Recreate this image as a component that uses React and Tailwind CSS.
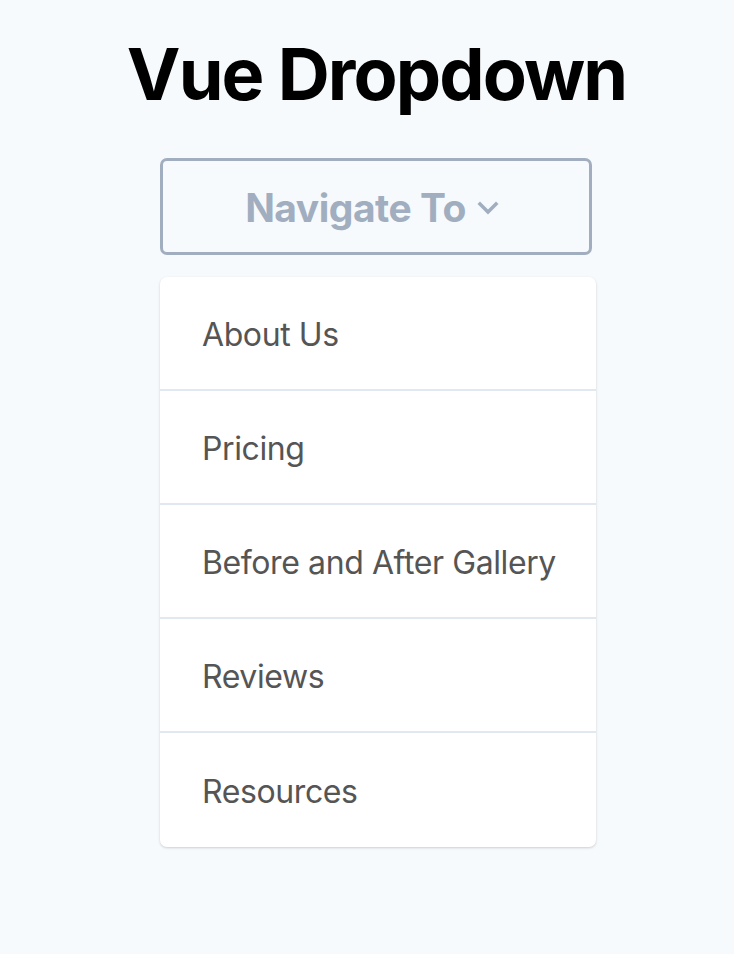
export default function App() {
  const items = ["About Us", "Pricing", "Before and After Gallery", "Reviews", "Resources"];
  return (
    <div className="min-h-[954px] bg-[#f7fafc] font-['Inter',sans-serif]">
      <div className="ml-[160px] w-[436px] flex flex-col pt-[38px] pb-[100px]">
        <h1 className="self-center whitespace-nowrap text-[72px] leading-none font-bold text-black tracking-[-1.9px] -ml-[3px]">
          Vue Dropdown
        </h1>
        <button className="mt-[48px] w-[432px] h-[97px] border-[3px] border-[#a0aec0] rounded-[7px] flex items-center justify-center gap-[11px] text-[#a0aec0] text-[39px] font-bold leading-none pr-[8px] pt-[2px]">
          <span className="tracking-[-0.5px]">Navigate To</span>
          <svg width="22" height="14" viewBox="0 0 22 14" fill="none" stroke="#a0aec0" strokeWidth="3.5" strokeLinecap="square" strokeLinejoin="miter">
            <path d="M3 3 L11 11 L19 3" />
          </svg>
        </button>
        <div className="mt-[22px] bg-white rounded-[7px] shadow-[0_1px_3px_rgba(0,0,0,0.12),0_1px_2px_rgba(0,0,0,0.06)] overflow-hidden">
          {items.map((t, i) => (
            <div
              key={t}
              className={`h-[114px] flex items-center pl-[42px] pt-[3px] text-[32px] tracking-[-0.4px] text-[#555] leading-none ${i < items.length - 1 ? "border-b-2 border-[#e2e8f0]" : ""}`}
            >
              {t}
            </div>
          ))}
        </div>
      </div>
    </div>
  );
}
